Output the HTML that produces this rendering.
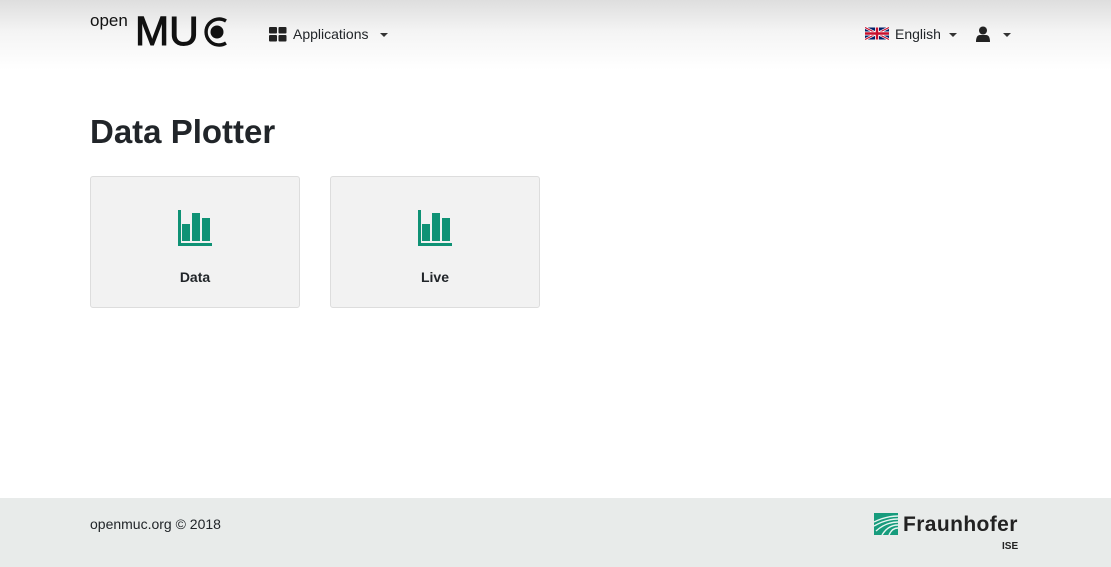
<!DOCTYPE html>
<html><head><meta charset="utf-8"><style>
*{box-sizing:border-box}
body{margin:0;width:1111px;height:567px;position:relative;font-family:"Liberation Sans",sans-serif;background:#fff;color:#212529;overflow:hidden}
.nav{position:absolute;left:0;top:0;width:1111px;height:70px;background:linear-gradient(#dedede,#f4f4f4 45%,#fff)}
.t{position:absolute;font-size:14px;color:#212529}
.caret{position:absolute;width:0;height:0;border-left:4px solid transparent;border-right:4px solid transparent;border-top:4px solid #333}
h1{position:absolute;left:90px;top:113px;margin:0;font-size:33px;font-weight:bold;color:#212529}
.card{position:absolute;top:176px;width:210px;height:132px;background:#f2f2f2;border:1px solid #ddd;border-radius:3px}
.card svg{position:absolute;left:87px;top:33px}
.card .l{position:absolute;top:92px;width:100%;text-align:center;font-weight:bold;font-size:14px}
.foot{position:absolute;left:0;top:498px;width:1111px;height:69px;background:#e8ebea}
</style></head><body>
<div class="nav">
 <div style="position:absolute;left:90px;top:11px;font-size:17px;color:#111">open</div>
 <div style="position:absolute;left:135px;top:13px;font-size:41px;color:#111;line-height:37px;-webkit-text-stroke:1px #111">MU</div>
 <svg style="position:absolute;left:199px;top:16px" width="31" height="32" viewBox="0 0 31 32"><path d="M27 5 A13 13 0 1 0 27 27" fill="none" stroke="#111" stroke-width="3.4"/><circle cx="18" cy="16" r="6.5" fill="#111"/></svg>
 <svg style="position:absolute;left:269px;top:27px" width="18" height="15"><rect x="0" y="0" width="8" height="6.5" rx="1" fill="#222"/><rect x="9.5" y="0" width="8" height="6.5" rx="1" fill="#222"/><rect x="0" y="8" width="8" height="6.5" rx="1" fill="#222"/><rect x="9.5" y="8" width="8" height="6.5" rx="1" fill="#222"/></svg>
 <div class="t" style="left:293px;top:26px">Applications</div>
 <div class="caret" style="left:380px;top:33px"></div>
 <svg style="position:absolute;left:865px;top:26px" width="24" height="15" viewBox="0 0 60 30"><rect width="60" height="30" fill="#012169"/><path d="M0,0 L60,30 M60,0 L0,30" stroke="#fff" stroke-width="6"/><path d="M0,0 L60,30 M60,0 L0,30" stroke="#C8102E" stroke-width="3"/><path d="M30,0 V30 M0,15 H60" stroke="#fff" stroke-width="10"/><path d="M30,0 V30 M0,15 H60" stroke="#C8102E" stroke-width="6"/></svg>
 <div class="t" style="left:895px;top:26px">English</div>
 <div class="caret" style="left:949px;top:33px"></div>
 <svg style="position:absolute;left:975px;top:26px" width="16" height="16" viewBox="0 0 16 16"><circle cx="8" cy="4.5" r="4" fill="#222"/><path d="M1 16 Q1 9 5 9 L11 9 Q15 9 15 16 Z" fill="#222"/></svg>
 <div class="caret" style="left:1003px;top:33px"></div>
</div>
<h1>Data Plotter</h1>
<div class="card" style="left:90px">
 <svg width="34" height="36" viewBox="0 0 34 36"><rect x="0" y="0" width="3" height="36" fill="#0f9275"/><rect x="0" y="33" width="34" height="3" fill="#0f9275"/><rect x="4" y="14" width="8" height="17" fill="#0f9275"/><rect x="14" y="3" width="8" height="28" fill="#0f9275"/><rect x="24" y="8" width="8" height="23" fill="#0f9275"/></svg>
 <div class="l">Data</div>
</div>
<div class="card" style="left:330px">
 <svg width="34" height="36" viewBox="0 0 34 36"><rect x="0" y="0" width="3" height="36" fill="#0f9275"/><rect x="0" y="33" width="34" height="3" fill="#0f9275"/><rect x="4" y="14" width="8" height="17" fill="#0f9275"/><rect x="14" y="3" width="8" height="28" fill="#0f9275"/><rect x="24" y="8" width="8" height="23" fill="#0f9275"/></svg>
 <div class="l">Live</div>
</div>
<div class="foot">
 <div class="t" style="left:90px;top:18px">openmuc.org © 2018</div>
 <svg style="position:absolute;left:874px;top:15px" width="24" height="22" viewBox="0 0 24 22"><rect width="24" height="22" fill="#179c7d"/><path d="M0 9 Q12 3 24 3 M0 13 Q12 6 24 6 M2 18 Q12 9 24 9 M8 22 Q14 12 24 12 M15 22 Q18 15 24 15" stroke="#e8f5f1" stroke-width="1.4" fill="none"/></svg>
 <div style="position:absolute;left:903px;top:15px;font-size:21px;font-weight:bold;color:#222;letter-spacing:0.4px">Fraunhofer</div>
 <div style="position:absolute;left:1002px;top:43px;font-size:10px;font-weight:bold;color:#222">ISE</div>
</div>
</body></html>
